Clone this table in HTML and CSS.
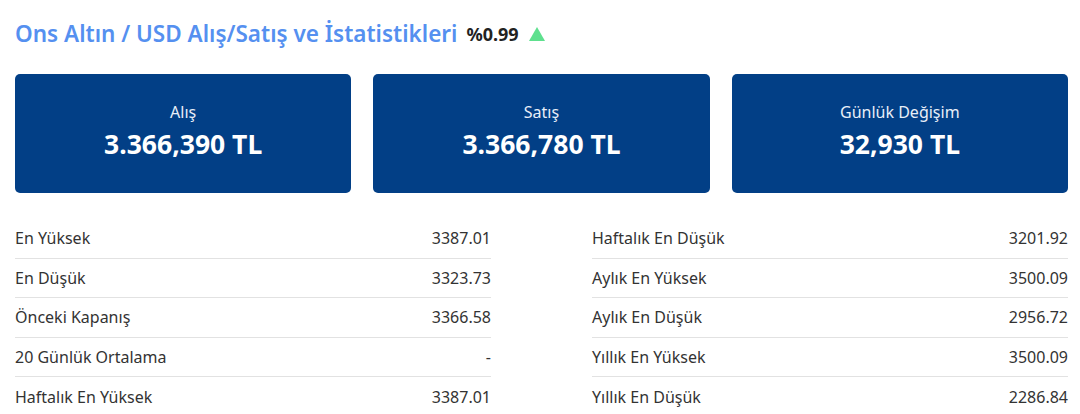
FILE: index.html
```html
<!DOCTYPE html>
<html lang="tr">
<head>
<meta charset="utf-8">
<title>Ons Altın / USD</title>
<link rel="stylesheet" href="styles.css">
</head>
<body>
<div class="page">
  <h1 class="title"><span class="title-text">Ons Altın / USD Alış/Satış ve İstatistikleri</span><span class="change">%0.99</span><span class="arrow"></span></h1>
  <div class="cards">
    <div class="card"><div class="card-label">Alış</div><div class="card-value">3.366,390 TL</div></div>
    <div class="card"><div class="card-label">Satış</div><div class="card-value">3.366,780 TL</div></div>
    <div class="card"><div class="card-label">Günlük Değişim</div><div class="card-value">32,930 TL</div></div>
  </div>
  <div class="stats">
    <div class="col">
      <div class="row"><span>En Yüksek</span><span>3387.01</span></div>
      <div class="row"><span>En Düşük</span><span>3323.73</span></div>
      <div class="row"><span>Önceki Kapanış</span><span>3366.58</span></div>
      <div class="row"><span>20 Günlük Ortalama</span><span>-</span></div>
      <div class="row"><span>Haftalık En Yüksek</span><span>3387.01</span></div>
    </div>
    <div class="col">
      <div class="row"><span>Haftalık En Düşük</span><span>3201.92</span></div>
      <div class="row"><span>Aylık En Yüksek</span><span>3500.09</span></div>
      <div class="row"><span>Aylık En Düşük</span><span>2956.72</span></div>
      <div class="row"><span>Yıllık En Yüksek</span><span>3500.09</span></div>
      <div class="row"><span>Yıllık En Düşük</span><span>2286.84</span></div>
    </div>
  </div>
</div>
</body>
</html>
```

FILE: styles.css
```css
* { box-sizing: border-box; }
html, body { margin: 0; padding: 0; background: #fff; }
body { font-family: "Noto Sans", "Open Sans", sans-serif; color: #333; }
.page { padding: 19px 12px 0 15px; width: 1080px; }
.title {
  margin: 0;
  font-size: 22.5px;
  font-weight: 600;
  color: #5590f0;
  line-height: 30px;
  display: flex;
  align-items: center;
}
.change { color: #222; font-size: 18px; font-weight: 700; margin-left: 9px; }
.arrow {
  width: 0; height: 0;
  margin-left: 10px;
  border-left: 8.5px solid transparent;
  border-right: 8.5px solid transparent;
  border-bottom: 14px solid #5ee08e;
}
.cards {
  margin-top: 25px;
  display: grid;
  grid-template-columns: repeat(3, 1fr);
  gap: 22px;
}
.card {
  background: #023f86;
  border-radius: 5px;
  height: 119px;
  color: #fff;
  display: flex;
  flex-direction: column;
  align-items: center;
  justify-content: center;
  padding-bottom: 4px;
}
.card-label { font-size: 16px; line-height: 20px; color: #e8eef8; }
.card-value { font-size: 26.5px; font-weight: 700; line-height: 34px; margin-top: 5px; }
.stats {
  margin-top: 26px;
  display: grid;
  grid-template-columns: 476px 476px;
  justify-content: space-between;
}
.row {
  display: flex;
  justify-content: space-between;
  align-items: center;
  height: 39.5px;
  font-size: 16px;
  color: #333;
  border-bottom: 1px solid #e2e2e2;
}
.row:last-child { border-bottom: none; }
```
